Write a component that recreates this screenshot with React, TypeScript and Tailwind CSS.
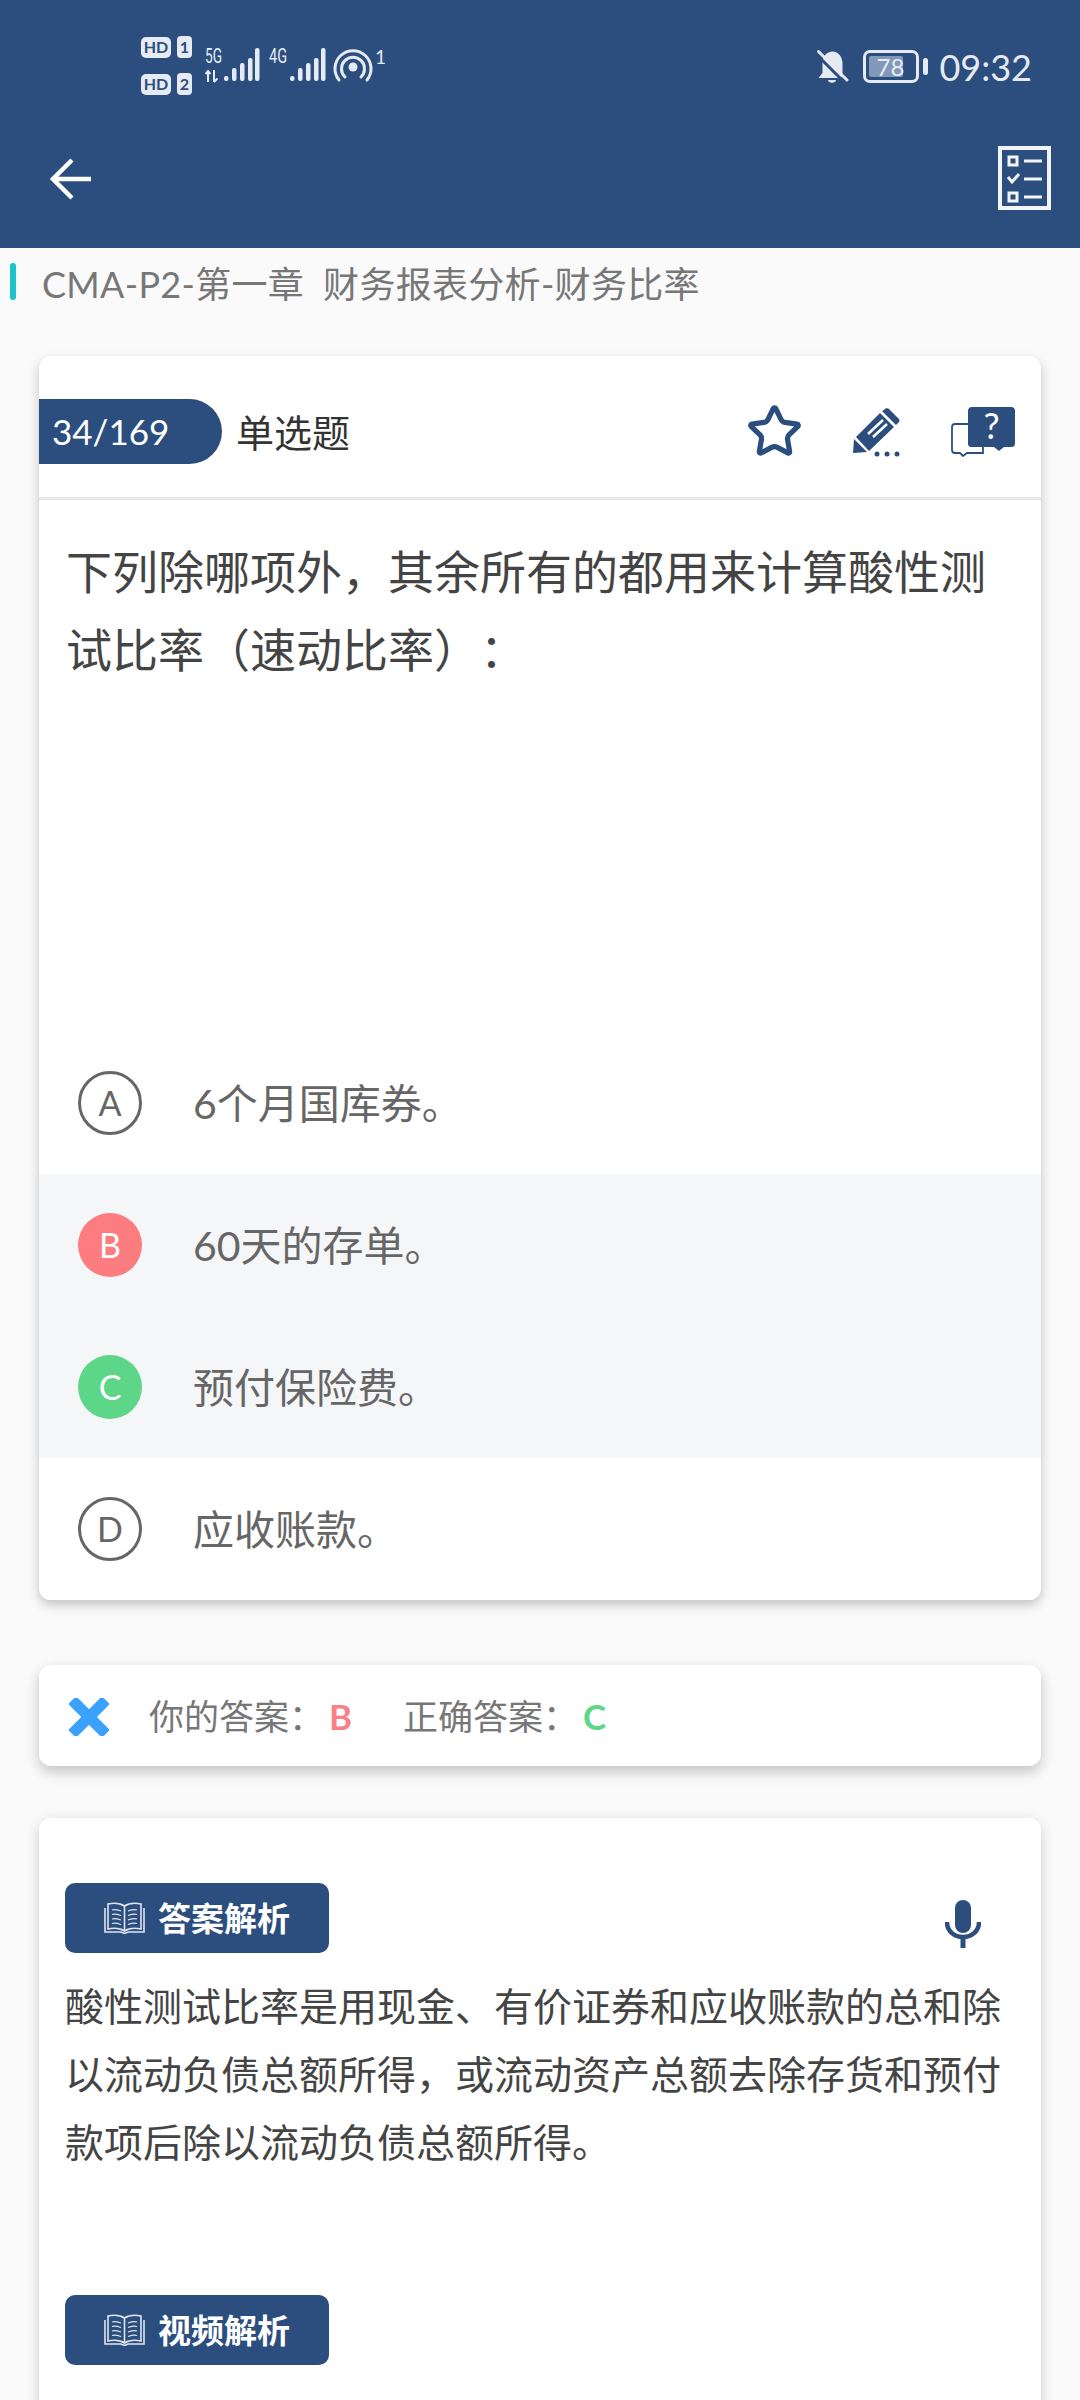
import React from "react";
import { Star } from "lucide-react";

const NAVY = "#2c4e7f";

function Bars() {
  const xs = [0, 8, 16, 24, 31];
  const ys = [28, 20, 15, 10, 0];
  return (
    <>
      {xs.map((bx, i) => (
        <rect key={i} x={bx} y={ys[i]} width={4.5} height={33 - ys[i]} rx={2} fill="#e6eaf2" />
      ))}
    </>
  );
}

function HdBadge({ n }: { n: string }) {
  return (
    <div className="flex items-center gap-[6px]">
      <div className="flex h-[21px] w-[30px] items-center justify-center rounded-[5px] bg-[#e6eaf2] text-[16px] leading-none font-bold text-[#2c4e7f]">HD</div>
      <div className="flex h-[22px] w-[15px] items-center justify-center rounded-[4px] bg-[#e6eaf2] text-[16px] leading-none font-bold text-[#2c4e7f]">{n}</div>
    </div>
  );
}

function StatusBar() {
  return (
    <div className="flex h-[120px] items-start justify-between pt-[36px] pr-[48px] pl-[141px]">
      <div className="flex items-start">
        <div className="flex flex-col gap-[15px]">
          <HdBadge n="1" />
          <HdBadge n="2" />
        </div>
        <svg className="mt-[12px] ml-[13px]" width="190" height="36" viewBox="0 0 190 36" fill="none">
          <text x="0" y="15" fontSize="20" fill="#e6eaf2" fontFamily="Roboto,sans-serif" textLength="17" lengthAdjust="spacingAndGlyphs">5G</text>
          <path d="M3 34V23M0.5 26L3 23L5.5 26M9 22V34M9 34L12.5 30.5" stroke="#e6eaf2" strokeWidth="2" />
          <g transform="translate(19,0)"><Bars /></g>
          <text x="64" y="15" fontSize="20" fill="#e6eaf2" fontFamily="Roboto,sans-serif" textLength="18" lengthAdjust="spacingAndGlyphs">4G</text>
          <g transform="translate(85,0)"><Bars /></g>
          <circle cx="148" cy="19" r="4.5" fill="#e6eaf2" />
          <path d="M140 29A11.5 11.5 0 1 1 156 29" stroke="#e6eaf2" strokeWidth="3" strokeLinecap="round" />
          <path d="M134 32A18 18 0 1 1 162 32" stroke="#e6eaf2" strokeWidth="3" strokeLinecap="round" />
          <text x="170" y="16" fontSize="19" fill="#e6eaf2" fontFamily="Lato,sans-serif">1</text>
        </svg>
      </div>
      <div className="flex items-start">
        <svg className="mt-[14px]" width="32" height="34" viewBox="0 0 32 34" fill="none">
          <path d="M15 1.5C9 2 5.5 7 5.5 13V23L1.5 28H24L25.5 25V13C25.5 7 21 1 15 1.5Z" fill="#e6eaf2" />
          <path d="M11 30H19C19 33.5 11 33.5 11 30Z" fill="#e6eaf2" />
          <path d="M-1 4L27 32" stroke={NAVY} strokeWidth="3" />
          <path d="M1.5 1.5L30 30" stroke="#e6eaf2" strokeWidth="3" strokeLinecap="round" />
        </svg>
        <div className="relative mt-[14px] ml-[14px] flex h-[33px] w-[56px] items-center rounded-[7px] border-[3px] border-[#e6eaf2] p-[3px]">
          <div className="h-full w-[34px] rounded-[2px] bg-[#8298b9]" />
          <span className="absolute top-0 left-[10px] text-[24px] leading-[27px] text-[#e6eaf2] [font-family:Lato,sans-serif]">78</span>
        </div>
        <div className="mt-[22px] ml-[4px] h-[17px] w-[5px] rounded-full bg-[#e6eaf2]" />
        <span className="mt-[13px] ml-[11px] text-[36px] leading-none text-[#e6eaf2] [font-family:Lato,sans-serif]">09:32</span>
      </div>
    </div>
  );
}

function Toolbar() {
  return (
    <div className="flex h-[128px] items-start justify-between pt-[26px] pr-[29px] pl-[50px]">
      <svg className="mt-[12px]" width="42" height="42" viewBox="0 0 42 42" fill="none">
        <path d="M41 21H4M22 2L3 21L22 40" stroke="#ffffff" strokeWidth="4.5" />
      </svg>
      <svg width="53" height="64" viewBox="0 0 53 64" fill="none">
        <rect x="2" y="2" width="49" height="60" stroke="#f2f4f8" strokeWidth="4" />
        <rect x="11" y="11" width="8" height="8" stroke="#f2f4f8" strokeWidth="3" />
        <path d="M26 15H44M26 33H44M26 51H44" stroke="#f2f4f8" strokeWidth="3" />
        <path d="M10 31L14 36L21 28" stroke="#f2f4f8" strokeWidth="3" />
        <rect x="11" y="47" width="8" height="8" stroke="#f2f4f8" strokeWidth="3" />
      </svg>
    </div>
  );
}

function Pencil() {
  return (
    <svg width="48" height="50" viewBox="0 0 48 50" fill="none">
      <path d="M31 3C32 1 35 1 36 2L45 11C47 13 47 14 45 16L43 18L29 4Z" fill={NAVY} />
      <path d="M27 6L41 20L16 44L3 30Z" fill={NAVY} />
      <path d="M1 32L14 45L0 46Z" fill={NAVY} />
      <path d="M15 27L30 13M20 30L34 17" stroke="#ffffff" strokeWidth="2.5" />
      <circle cx="24" cy="47" r="2.5" fill={NAVY} />
      <circle cx="34" cy="47" r="2.5" fill={NAVY} />
      <circle cx="44" cy="47" r="2.5" fill={NAVY} />
    </svg>
  );
}

function Ask() {
  return (
    <svg width="65" height="50" viewBox="0 0 65 50" fill="none">
      <path d="M4 17H32V46H16L12 49L9 46H4C2 46 1 45 1 43V20C1 18 2 17 4 17Z" stroke={NAVY} strokeWidth="1.8" />
      <path d="M21 0H60C63 0 64 2 64 4V36C64 39 63 40 60 40H53L48 44L43 40H21C18 40 17 39 17 36V4C17 2 18 0 21 0Z" fill={NAVY} />
      <text x="40.5" y="32" textAnchor="middle" fontSize="36" fill="#ffffff" fontFamily="Lato,sans-serif">?</text>
    </svg>
  );
}

function Book() {
  return (
    <svg width="41" height="32" viewBox="0 0 41 32" fill="none" stroke="#dfe5ef" strokeWidth="1.6">
      <path d="M20.5 4C16 1 9 1 4 2V27C9 26 16 26 20.5 29C25 26 32 26 37 27V2C32 1 25 1 20.5 4Z" />
      <path d="M20.5 4V29" />
      <path d="M1 6V30H17L20.5 31.5L24 30H40V6" />
      <path d="M8 8C11 7 14 8 17 9M8 12.5C11 11.5 14 12.5 17 13.5M8 17C11 16 14 17 17 18M8 21.5C11 20.5 14 21.5 17 22.5M33 8C30 7 27 8 24 9M33 12.5C30 11.5 27 12.5 24 13.5M33 17C30 16 27 17 24 18M33 21.5C30 20.5 27 21.5 24 22.5" strokeWidth="1.3" />
    </svg>
  );
}

function SectionTag({ label }: { label: string }) {
  return (
    <div className="flex h-[70px] w-[264px] items-center justify-center gap-[13px] rounded-[10px] bg-[#2c4e7f]">
      <Book />
      <span className="text-[33px] leading-none font-bold text-white">{label}</span>
    </div>
  );
}

function Option({ letter, text, state }: { letter: string; text: string; state?: "wrong" | "right" }) {
  const base = "flex h-[64px] w-[64px] shrink-0 items-center justify-center rounded-full text-[34px] leading-none [font-family:Lato,sans-serif]";
  const circle =
    state === "wrong"
      ? "bg-[#fd7c7f] text-white"
      : state === "right"
        ? "bg-[#5ed687] text-white"
        : "border-[3px] border-[#666666] text-[#666666]";
  return (
    <div className={`flex h-[142px] items-center gap-[51px] pl-[39px] ${state ? "bg-[#f5f6f8]" : "bg-white"}`}>
      <div className={`${base} ${circle}`}>{letter}</div>
      <span className="text-[41px] leading-none text-[#666666]">{text}</span>
    </div>
  );
}

export default function App() {
  return (
    <div className="h-[2400px] w-[1080px] overflow-hidden bg-[#fafafa] [text-spacing-trim:space-all] [font-family:Lato,'Noto_Sans_CJK_SC',sans-serif]">
      <header className="h-[248px] bg-[#2c4e7f]">
        <StatusBar />
        <Toolbar />
      </header>

      <div className="flex h-[108px] items-start pt-[15px] pl-[10px]">
        <div className="h-[37px] w-[6px] rounded-full bg-[#1cc4c9]" />
        <span className="-mt-[2px] ml-[26px] text-[36px] leading-[46px] tracking-[0.3px] whitespace-pre text-[#777777]">CMA-P2-第一章  财务报表分析-财务比率</span>
      </div>

      <main className="flex flex-col px-[39px]">
        <section className="h-[1244px] overflow-hidden rounded-[12px] bg-white shadow-[0_5px_12px_rgba(0,0,0,0.22)]">
          <div className="flex h-[144px] items-center justify-between border-b-[3px] border-[#e9e9e9] pt-[10px] pr-[25px]">
            <div className="flex items-center">
              <div className="flex h-[65px] w-[183px] items-center rounded-r-full bg-[#2c4e7f] pl-[13px] text-[35px] leading-none text-white">34/169</div>
              <span className="ml-[14px] text-[38px] leading-none text-[#333333]">单选题</span>
            </div>
            <div className="flex items-center">
              <Star size={57} strokeWidth={2.2} color={NAVY} />
              <div className="ml-[50px]"><Pencil /></div>
              <div className="ml-[50px]"><Ask /></div>
            </div>
          </div>
          <div className="h-[532px] px-[27px] pt-[33px] text-[46px] leading-[78px] text-[#444444]">
            下列除哪项外，其余所有的都用来计算酸性测试比率（速动比率）：
          </div>
          <Option letter="A" text="6个月国库券。" />
          <Option letter="B" text="60天的存单。" state="wrong" />
          <Option letter="C" text="预付保险费。" state="right" />
          <Option letter="D" text="应收账款。" />
        </section>

        <section className="mt-[65px] flex h-[101px] items-center rounded-[12px] bg-white pt-[2px] pl-[30px] shadow-[0_6px_14px_rgba(0,0,0,0.22)]">
          <svg width="40" height="38" viewBox="0 0 40 38" fill="none">
            <path d="M7 6L33 32M33 6L7 32" stroke="#3aa2fd" strokeWidth="11" strokeLinecap="square" />
          </svg>
          <span className="ml-[40px] text-[35px] leading-none text-[#777777]">你的答案：</span>
          <span className="ml-[5px] w-[74px] text-[35px] leading-none font-bold text-[#f98087]">B</span>
          <span className="text-[35px] leading-none text-[#777777]">正确答案：</span>
          <span className="ml-[5px] text-[35px] leading-none font-bold text-[#5ed687]">C</span>
        </section>

        <section className="mt-[52px] h-[700px] rounded-[12px] bg-white px-[26px] pt-[65px] shadow-[0_4px_14px_rgba(0,0,0,0.18)]">
          <div className="flex items-start justify-between pr-[34px]">
            <SectionTag label="答案解析" />
            <svg className="mt-[17px]" width="36" height="48" viewBox="0 0 36 48" fill="none">
              <rect x="10" y="0" width="16" height="33" rx="8" fill={NAVY} />
              <path d="M2 22C2 31 9 37 18 37C27 37 34 31 34 22" stroke={NAVY} strokeWidth="4.5" />
              <path d="M18 37V48" stroke={NAVY} strokeWidth="5" />
            </svg>
          </div>
          <p className="mt-[19px] text-[39px] leading-[68px] text-[#444444]">
            酸性测试比率是用现金、有价证券和应收账款的总和除以流动负债总额所得，或流动资产总额去除存货和预付款项后除以流动负债总额所得。
          </p>
          <div className="mt-[119px]">
            <SectionTag label="视频解析" />
          </div>
        </section>
      </main>
    </div>
  );
}
